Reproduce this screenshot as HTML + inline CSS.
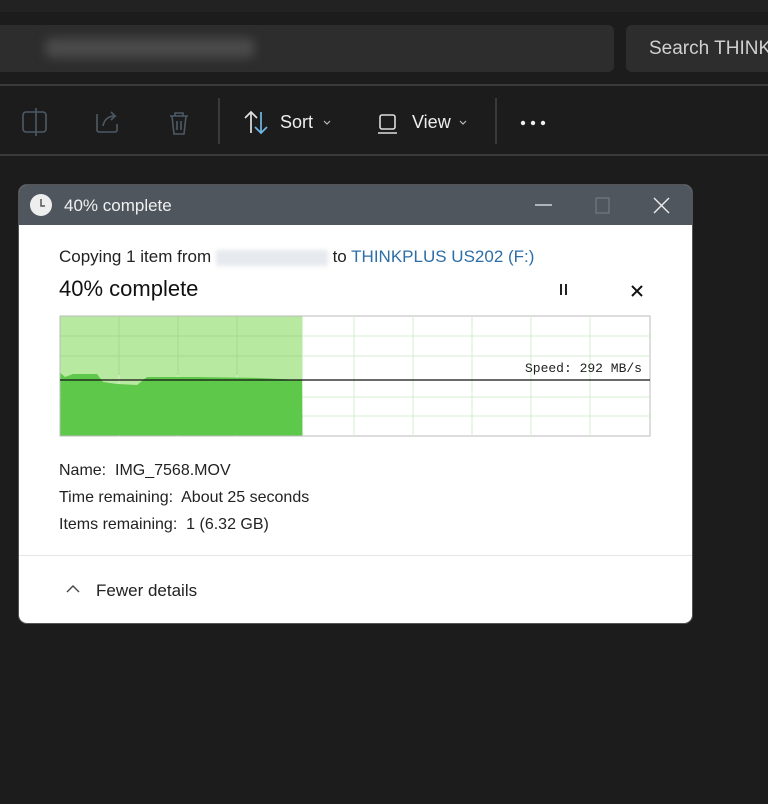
<!DOCTYPE html><html><head><style>
body{margin:0;width:768px;height:804px;background:#1c1c1c;font-family:"Liberation Sans",sans-serif;position:relative;overflow:hidden}
.a{position:absolute;white-space:nowrap}
</style></head><body>
<div class="a" style="left:0;top:0;width:768px;height:12px;background:#222"></div>
<div class="a" style="left:0;top:25px;width:614px;height:47px;background:#2d2d2d;border-radius:0 6px 6px 0"></div>
<div class="a" style="left:45px;top:38px;width:210px;height:20px;background:#4a4a4a;filter:blur(5px);border-radius:8px"></div>
<div class="a" style="left:626px;top:25px;width:150px;height:47px;background:#2d2d2d;border-radius:6px"></div>
<div class="a" style="left:649px;top:38px;color:#d0d0d0;font-size:19px">Search THINK</div>
<div class="a" style="left:0;top:84px;width:768px;height:2px;background:#3a3a3a"></div>
<div class="a" style="left:0;top:154px;width:768px;height:2px;background:#3a3a3a"></div>
<svg class="a" style="left:0;top:86px" width="560" height="68">
<g stroke="#4d5a66" stroke-width="1.6" fill="none">
<rect x="23" y="26" width="23" height="20" rx="3"/><line x1="36" y1="22" x2="36" y2="50"/>
<path d="M97 28 v16 a2 2 0 0 0 2 2 h16 a2 2 0 0 0 2 -2 v-6 M103 40 q2 -10 12 -10 l-4 -4 M115 30 l-4 4"/>
<path d="M170 30 h18 M175 30 v-3 h8 v3 M172 30 l2 18 h10 l2 -18 M177 35 v9 M181 35 v9"/>
</g>
<line x1="219" y1="12" x2="219" y2="58" stroke="#3a3a3a" stroke-width="2"/>
<line x1="496" y1="12" x2="496" y2="58" stroke="#3a3a3a" stroke-width="2"/>
<g stroke="#e0e0e0" stroke-width="1.7" fill="none"><path d="M251 47 V26 M245 32 l6 -6 6 6"/></g>
<g stroke="#6fb7e6" stroke-width="1.7" fill="none"><path d="M261 26 V47 M255 41 l6 6 6 -6"/></g>
<rect x="380" y="29" width="15" height="14" rx="2" stroke="#ddd" stroke-width="1.6" fill="none"/>
<line x1="378" y1="47" x2="397" y2="47" stroke="#ddd" stroke-width="1.6"/>
<g fill="#eee"><circle cx="523" cy="37" r="2.2"/><circle cx="533" cy="37" r="2.2"/><circle cx="543" cy="37" r="2.2"/></g>
<path d="M324 35 l3 3 3 -3 M460 35 l3 3 3 -3" stroke="#bbb" fill="none" stroke-width="1.2"/>
</svg>
<div class="a" style="left:280px;top:112px;color:#eee;font-size:18px">Sort</div>
<div class="a" style="left:412px;top:112px;color:#eee;font-size:18px">View</div>

<div class="a" style="left:19px;top:185px;width:673px;height:438px;background:#fff;border-radius:8px;overflow:hidden;box-shadow:0 0 0 1px #555">
<div class="a" style="left:0;top:0;width:673px;height:40px;background:#4f565e"></div>
<svg class="a" style="left:10px;top:8px" width="26" height="26"><circle cx="12" cy="12" r="11" fill="#eee"/><path d="M12 6 v7 h4" stroke="#555" stroke-width="1.5" fill="none"/></svg>
<div class="a" style="left:45px;top:11px;color:#f0f0f0;font-size:17px">40% complete</div>
<svg class="a" style="left:510px;top:8px" width="160" height="26"><line x1="6" y1="12" x2="23" y2="12" stroke="#eee" stroke-width="1.3"/><rect x="67" y="5" width="13" height="15" fill="none" stroke="#7a8088"/><path d="M125 5 l15 15 M140 5 l-15 15" stroke="#eee" stroke-width="1.4"/></svg>
<div class="a" style="left:40px;top:62px;color:#222;font-size:17px">Copying 1 item from <span style="display:inline-block;width:112px;height:16px;background:#e6e9ee;vertical-align:middle;filter:blur(2px)"></span> to <span style="color:#2d6ea6">THINKPLUS US202 (F:)</span></div>
<div class="a" style="left:40px;top:91px;color:#111;font-size:22px">40% complete</div>
<div class="a" style="left:541px;top:99px;height:11px;border-left:2px solid #222;border-right:2px solid #222;width:3px"></div>
<svg class="a" style="left:610px;top:98px" width="16" height="16"><path d="M3 3 l10 10 M13 3 l-10 10" stroke="#111" stroke-width="2"/></svg>
<svg class="a" style="left:40px;top:130px" width="593" height="123">
<rect x="1" y="1" width="590" height="120" fill="#fff" stroke="#bbb"/>
<rect x="1.5" y="1.5" width="242" height="119" fill="#b7e9a0"/>
<g stroke="#d4ecd0" stroke-width="1"><line x1="60" y1="1" x2="60" y2="121"/><line x1="119" y1="1" x2="119" y2="121"/><line x1="178" y1="1" x2="178" y2="121"/><line x1="295" y1="1" x2="295" y2="121"/><line x1="354" y1="1" x2="354" y2="121"/><line x1="413" y1="1" x2="413" y2="121"/><line x1="472" y1="1" x2="472" y2="121"/><line x1="531" y1="1" x2="531" y2="121"/>
<line x1="1" y1="21" x2="591" y2="21"/><line x1="1" y1="41" x2="591" y2="41"/><line x1="1" y1="82" x2="591" y2="82"/><line x1="1" y1="101" x2="591" y2="101"/></g>
<g stroke="#a5dc8c" stroke-width="1"><line x1="60" y1="1" x2="60" y2="60"/><line x1="119" y1="1" x2="119" y2="60"/><line x1="178" y1="1" x2="178" y2="60"/><line x1="1" y1="21" x2="243" y2="21"/><line x1="1" y1="41" x2="243" y2="41"/></g>
<path d="M1.5 58 L6 62 L14 59 L22 59 L38 59 L44 67 L58 69 L78 70 L88 62 L140 62 L200 63 L243 65 L243.5 120.5 L1.5 120.5Z" fill="#5ec84b"/>
<line x1="1" y1="65" x2="591" y2="65" stroke="#111" stroke-width="1.3"/>
<text x="583" y="57" text-anchor="end" font-family="Liberation Mono,monospace" font-size="13" fill="#222">Speed: 292 MB/s</text>
</svg>
<div class="a" style="left:40px;top:272px;color:#222;font-size:16px;line-height:27px">Name:&nbsp; IMG_7568.MOV<br>Time remaining:&nbsp; About 25 seconds<br>Items remaining:&nbsp; 1 (6.32 GB)</div>
<div class="a" style="left:0;top:370px;width:673px;height:1px;background:#e5e5e5"></div>
<svg class="a" style="left:46px;top:398px" width="16" height="12"><path d="M2 9 l6 -6 6 6" stroke="#444" stroke-width="1.4" fill="none"/></svg>
<div class="a" style="left:77px;top:396px;color:#222;font-size:17px">Fewer details</div>
</div>
</body></html>
